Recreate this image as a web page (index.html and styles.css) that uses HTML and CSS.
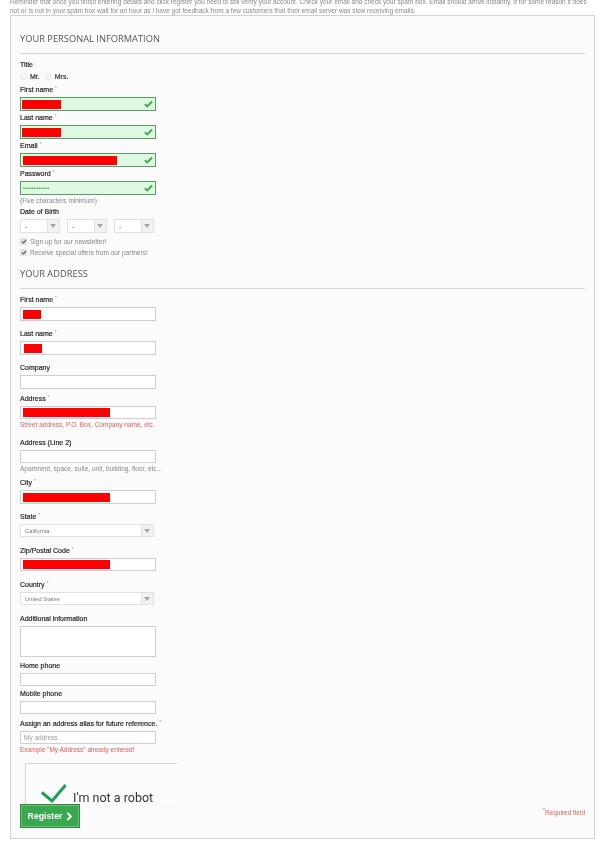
FILE: index.html
```html
<!DOCTYPE html>
<html lang="en">
<head>
<meta charset="utf-8">
<title>Create an account</title>
<link rel="stylesheet" href="styles.css">
</head>
<body>
<p class="notice">Reminder that once you finish entering details and click register you need to still verify your account. Check your email and check your spam box. Email should arrive instantly. If for some reason it does not or is not in your spam box wait for an hour as i have got feedback from a few customers that their email server was slow receiving emails.</p>
<form class="panel">
  <h3 class="heading">YOUR PERSONAL INFORMATION</h3>
  <div class="label l18">Title</div>
  <div class="radios">
    <span class="radio"></span><span class="radio-text">Mr.</span>
    <span class="radio"></span><span class="radio-text">Mrs.</span>
  </div>
  <div class="label">First name <sup>*</sup></div>
  <div class="input ok"><span class="redact r39"></span><svg class="tick" viewBox="0 0 10 8"><path d="M1 4.2 3.6 6.7 9 1.2"/></svg></div>
  <div class="label">Last name <sup>*</sup></div>
  <div class="input ok"><span class="redact r39"></span><svg class="tick" viewBox="0 0 10 8"><path d="M1 4.2 3.6 6.7 9 1.2"/></svg></div>
  <div class="label">Email <sup>*</sup></div>
  <div class="input ok"><span class="redact inset r94"></span><svg class="tick" viewBox="0 0 10 8"><path d="M1 4.2 3.6 6.7 9 1.2"/></svg></div>
  <div class="label">Password <sup>*</sup></div>
  <div class="input ok"><span class="dots">•••••••••••••••</span><svg class="tick" viewBox="0 0 10 8"><path d="M1 4.2 3.6 6.7 9 1.2"/></svg></div>
  <div class="hint">(Five characters minimum)</div>
  <div class="label">Date of Birth</div>
  <div class="dob-row">
    <div class="select small"><span class="select-text">-</span><span class="arrow"></span></div>
    <div class="select small"><span class="select-text">-</span><span class="arrow"></span></div>
    <div class="select small"><span class="select-text">-</span><span class="arrow"></span></div>
  </div>
  <div class="check-row"><span class="check"><svg viewBox="0 0 10 8"><path d="M1.5 4 4 6.5 8.5 1.5"/></svg></span>Sign up for our newsletter!</div>
  <div class="check-row"><span class="check"><svg viewBox="0 0 10 8"><path d="M1.5 4 4 6.5 8.5 1.5"/></svg></span>Receive special offers from our partners!</div>

  <h3 class="heading second">YOUR ADDRESS</h3>
  <div class="label l18">First name <sup>*</sup></div>
  <div class="input"><span class="redact inset r18"></span></div>
  <div class="label l20">Last name <sup>*</sup></div>
  <div class="input"><span class="redact inset2 r18"></span></div>
  <div class="label l20">Company</div>
  <div class="input"></div>
  <div class="label l17">Address <sup>*</sup></div>
  <div class="input low"><span class="redact inset r87"></span></div>
  <div class="hint error">Street address, P.O. Box, Company name, etc.</div>
  <div class="label l21">Address (Line 2)</div>
  <div class="input low"></div>
  <div class="hint">Apartment, space, suite, unit, building, floor, etc...</div>
  <div class="label l17">City <sup>*</sup></div>
  <div class="input"><span class="redact inset r87"></span></div>
  <div class="label l20">State <sup>*</sup></div>
  <div class="select full"><span class="select-text tiny">California</span><span class="arrow"></span></div>
  <div class="label l21">Zip/Postal Code <sup>*</sup></div>
  <div class="input low"><span class="redact inset r87"></span></div>
  <div class="label l21">Country <sup>*</sup></div>
  <div class="select full"><span class="select-text tiny">United States</span><span class="arrow"></span></div>
  <div class="label l21">Additional information</div>
  <div class="input area"></div>
  <div class="label l16">Home phone</div>
  <div class="input low"></div>
  <div class="label l15">Mobile phone</div>
  <div class="input low"></div>
  <div class="label l17">Assign an address alias for future reference. <sup>*</sup></div>
  <div class="input low alias">My address</div>
  <div class="hint error">Example "My Address" already entered!</div>
  <div class="captcha">
    <svg class="captcha-tick" viewBox="0 0 26 20"><path d="M.8 8.5 11 17 24.6 1"/></svg>
    <span class="captcha-text">I'm not a robot</span>
  </div>
  <div class="submit-row">
    <button class="register" type="button">Register<svg viewBox="0 0 6 10"><path d="M1.2 1 5 5 1.2 9"/></svg></button>
    <span class="required"><sup>*</sup>Required field</span>
  </div>
</form>
</body>
</html>
```
FILE: styles.css
```css
* { box-sizing: border-box; }
html, body { margin: 0; padding: 0; background: #fff; }
body {
  width: 614px;
  height: 849px;
  overflow: hidden;
  padding: 0 19px 0 10px;
  font-family: "Liberation Sans", Arial, sans-serif;
  font-size: 7px;
  color: #333;
  filter: blur(0.3px);
}
.notice {
  margin: -2px 0 0;
  padding-right: 3px;
  height: 17px;
  font-size: 6.5px;
  letter-spacing: 0.001px;
  line-height: 8.5px;
  color: #888;
}
.panel {
  height: 824px;
  border: 1px solid #d3d3d3;
  background: #fbfbfb;
  padding: 0 9px;
}
.heading {
  margin: 0;
  height: 38px;
  padding-top: 17px;
  line-height: 11px;
  font-family: "Open Sans", sans-serif;
  font-size: 9.3px;
  font-weight: 400;
  color: #555;
  border-bottom: 1px solid #d6d4d4;
}
.heading.second { height: 31px; padding-top: 10px; }
.label {
  display: flex;
  align-items: flex-end;
  gap: 2px;
  height: 14px;
  padding-bottom: 2px;
  line-height: 10px;
  font-size: 7px;
  color: #2a2a2a;
  -webkit-text-stroke: 0.2px #2a2a2a;
  white-space: nowrap;
}
.label sup { font-size: 5px; line-height: 8px; margin-bottom: 3px; color: #999; -webkit-text-stroke: 0; }
.l15 { height: 15px; }
.l16 { height: 16px; }
.l17 { height: 17px; }
.l18 { height: 18px; }
.l20 { height: 20px; }
.l21 { height: 21px; }
.radios { display: flex; align-items: flex-start; height: 11px; padding-top: 1px; }
.radio { width: 7px; height: 7px; border-radius: 50%; border: 1px solid #e4e4e4; background: #fafafa; margin-right: 3px; }
.radio-text { margin-right: 5px; line-height: 7px; font-size: 7px; color: #333; -webkit-text-stroke: 0.2px #333; }
.input {
  display: flex;
  align-items: center;
  width: 136px;
  height: 14px;
  padding-left: 1px;
  border: 1px solid #cfcfcf;
  background: #fff;
  font-size: 6.5px;
  position: relative;
}
.input.low { height: 13px; }
.input.ok { background: #ddf9e1; border-color: #5a9e64; }
.input.area { height: 31px; }
.input.alias { padding-left: 3px; color: #999; }
.redact { display: block; height: 9px; background: #f00; }
.redact.inset { margin-left: 1px; }
.redact.inset2 { margin-left: 2px; }
.r18 { width: 18px; }
.r39 { width: 39px; }
.r87 { width: 87px; }
.r94 { width: 94px; }
.dots { padding-left: 1px; font-size: 5px; color: #46a74e; }
.tick { position: absolute; right: 2px; top: 2px; width: 9px; height: 8px; }
.tick path { fill: none; stroke: #46a74e; stroke-width: 2.2; }
.hint {
  height: 10px;
  line-height: 9px;
  padding-top: 1px;
  font-size: 6.5px;
  color: #888;
  white-space: nowrap;
}
.hint.error { color: #d9605f; }
.dob-row { display: flex; gap: 7px; height: 14px; }
.select {
  display: flex;
  align-items: center;
  height: 13px;
  border: 1px solid #e2e2e2;
  background: #fff;
  position: relative;
}
.select.small { width: 40px; height: 14px; }
.select.full { width: 134px; }
.select-text { padding-left: 4px; font-size: 7px; color: #666; }
.select-text.tiny { font-size: 5.8px; color: #777; }
.arrow {
  position: absolute;
  right: 0;
  top: 0;
  bottom: 0;
  width: 12px;
  background: #f1f1f1;
  border-left: 1px solid #e2e2e2;
}
.arrow::after {
  content: "";
  position: absolute;
  left: 2px;
  top: 4px;
  border-left: 3px solid transparent;
  border-right: 3px solid transparent;
  border-top: 4px solid #a4a4a4;
}
.check-row {
  display: flex;
  align-items: center;
  height: 11px;
  font-size: 6.55px;
  color: #888;
  white-space: nowrap;
}
.dob-row + .check-row { margin-top: 3px; }
.check {
  display: flex;
  align-items: center;
  justify-content: center;
  width: 7px;
  height: 7px;
  margin-right: 3px;
  background: #e2e2e2;
}
.check svg { width: 6px; height: 5px; }
.check path { fill: none; stroke: #666; stroke-width: 2; }
.captcha {
  position: relative;
  width: 152px;
  height: 40px;
  margin: 9px 0 0 5px;
  border-top: 1px solid #d3d3d3;
  border-left: 1px solid #d3d3d3;
  border-top-left-radius: 2px;
  background: #fcfcfc;
  overflow: hidden;
}
.captcha-tick { position: absolute; left: 15px; top: 20px; width: 26px; height: 20px; }
.captcha-tick path { fill: none; stroke: #1f9e5b; stroke-width: 3; }
.captcha-text {
  position: absolute;
  left: 47px;
  top: 27.5px;
  font-family: Roboto, sans-serif;
  font-size: 12.5px;
  line-height: 11px;
  color: #333;
}
.submit-row {
  display: flex;
  justify-content: space-between;
  align-items: center;
  margin-top: 1px;
}
.register {
  display: flex;
  align-items: center;
  justify-content: center;
  gap: 4px;
  width: 60px;
  height: 24px;
  padding: 0;
  border: 1px solid #2b8a3e;
  box-shadow: inset 0 0 0 1px #6cc178;
  background: #3aa84f;
  color: #fff;
  font-family: "Liberation Sans", Arial, sans-serif;
  font-size: 8.7px;
  font-weight: 700;
}
.register svg { width: 6px; height: 9px; }
.register path { fill: none; stroke: #fff; stroke-width: 2.2; }
.required { margin-bottom: 8px; font-size: 6.5px; color: #d9605f; }
.required sup { font-size: 5px; line-height: 0; }
```
